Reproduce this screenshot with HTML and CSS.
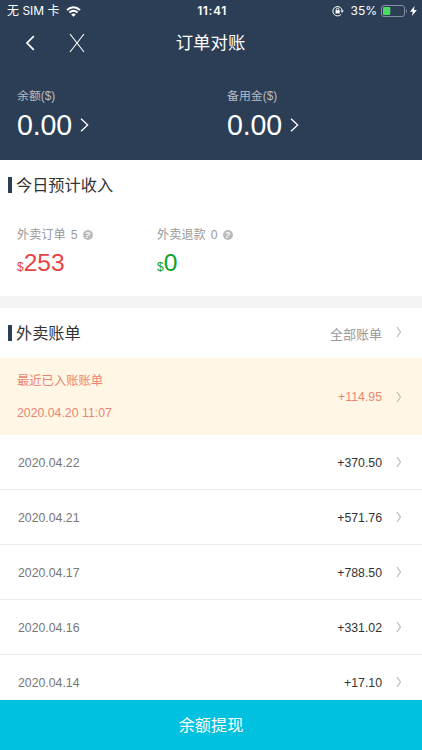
FILE: index.html
```html
<!DOCTYPE html>
<html lang="zh">
<head>
    <meta charset="UTF-8">
    <meta name="viewport" content="width=device-width, initial-scale=1.0">
    <title>订单对账</title>
    <link rel="stylesheet" href="styles.css">
</head>
<body>

    <div class="page">
        <header class="header">
            <div class="status-bar">
                <div class="status-left">
                    <span>无 SIM 卡</span>
                    <svg class="wifi" width="15" height="11" viewBox="0 0 15 11" fill="none" stroke="#fff" stroke-width="2">
                        <path d="M1 4.1C4.8.3 10.2.3 14 4.1"/>
                        <path d="M3.4 6.6c2.5-2.3 5.7-2.3 8.2 0"/>
                        <path d="M5.2 8.4c1.4-1.1 3.2-1.1 4.6 0L7.5 10.8z" fill="#fff" stroke="none"/>
                    </svg>
                </div>
                <div class="status-time">11:41</div>
                <div class="status-right">
                    <svg width="12" height="12" viewBox="0 0 12 12" fill="none" stroke="#fff">
                        <path d="M9.2 9.2A4.7 4.7 0 1 1 10.2 5.5"/>
                        <path d="M8.4 5.6h3.4l-1.7 2.2z" fill="#fff" stroke="none"/>
                        <path d="M4.4 5.4V4.3a1.2 1.2 0 0 1 2.4 0v1.1" stroke-width=".9"/>
                        <path d="M3.5 5.2h4.2v3.2H3.5z" fill="#fff" stroke="none"/>
                    </svg>
                    <span class="percent">35%</span>
                    <svg width="27" height="12" viewBox="0 0 27 12">
                        <rect x=".5" y=".5" width="23" height="11" rx="2.5" fill="none" stroke="#8490a0"/>
                        <rect x="2" y="2" width="7.3" height="8" rx="1" fill="#4cd964"/>
                        <path d="M25 4v4c1.4-.6 1.4-3.4 0-4z" fill="#8490a0"/>
                    </svg>
                    <svg class="bolt" width="7" height="10" viewBox="0 0 7 10">
                        <path d="M4.5 0L0 5.7h2.8L2 10l4.8-6H4z" fill="#fff"/>
                    </svg>
                </div>
            </div>

            <div class="nav">
                <svg class="nav-back" width="10" height="16" viewBox="0 0 10 16" fill="none" stroke="#fff" stroke-width="1.7">
                    <path d="M8.8 1.2L2 8l6.8 6.8"/>
                </svg>
                <svg class="nav-close" width="16" height="20" viewBox="0 0 16 20" fill="none" stroke="#fff" stroke-width="1.1">
                    <path d="M1 1l14 18M15 1L1 19"/>
                </svg>
                <h1>订单对账</h1>
            </div>

            <div class="balance">
                <div class="balance-item">
                    <p class="balance-label">余额($)</p>
                    <div class="balance-value">
                        <span>0.00</span>
                        <svg width="9" height="14" viewBox="0 0 9 14" fill="none" stroke="#fff" stroke-width="1.3"><path d="M1 .8L7.7 7 1 13.2"/></svg>
                    </div>
                </div>
                <div class="balance-item">
                    <p class="balance-label">备用金($)</p>
                    <div class="balance-value">
                        <span>0.00</span>
                        <svg width="9" height="14" viewBox="0 0 9 14" fill="none" stroke="#fff" stroke-width="1.3"><path d="M1 .8L7.7 7 1 13.2"/></svg>
                    </div>
                </div>
            </div>
        </header>

        <section class="income">
            <h2>今日预计收入</h2>
            <div class="income-list">
                <div class="income-item">
                    <p class="income-label">外卖订单<span class="count">5</span><i class="help">?</i></p>
                    <p class="income-value red"><small>$</small>253</p>
                </div>
                <div class="income-item">
                    <p class="income-label">外卖退款<span class="count">0</span><i class="help">?</i></p>
                    <p class="income-value green"><small>$</small>0</p>
                </div>
            </div>
        </section>

        <section class="bills">
            <div class="bills-head">
                <h2>外卖账单</h2>
                <span class="all">全部账单</span>
                <svg class="arrow" width="6" height="12" viewBox="0 0 6 12"><path d="M1 1l3.5 5L1 11"/></svg>
            </div>
            <div class="bill latest">
                <div class="bill-date">
                    <p>最近已入账账单</p>
                    <p>2020.04.20 11:07</p>
                </div>
                <span class="amount">+114.95</span>
                <svg class="arrow" width="6" height="12" viewBox="0 0 6 12"><path d="M1 1l3.5 5L1 11"/></svg>
            </div>
            <div class="bill">
                <span class="bill-date">2020.04.22</span>
                <span class="amount">+370.50</span>
                <svg class="arrow" width="6" height="12" viewBox="0 0 6 12"><path d="M1 1l3.5 5L1 11"/></svg>
            </div>
            <div class="bill">
                <span class="bill-date">2020.04.21</span>
                <span class="amount">+571.76</span>
                <svg class="arrow" width="6" height="12" viewBox="0 0 6 12"><path d="M1 1l3.5 5L1 11"/></svg>
            </div>
            <div class="bill">
                <span class="bill-date">2020.04.17</span>
                <span class="amount">+788.50</span>
                <svg class="arrow" width="6" height="12" viewBox="0 0 6 12"><path d="M1 1l3.5 5L1 11"/></svg>
            </div>
            <div class="bill">
                <span class="bill-date">2020.04.16</span>
                <span class="amount">+331.02</span>
                <svg class="arrow" width="6" height="12" viewBox="0 0 6 12"><path d="M1 1l3.5 5L1 11"/></svg>
            </div>
            <div class="bill">
                <span class="bill-date">2020.04.14</span>
                <span class="amount">+17.10</span>
                <svg class="arrow" width="6" height="12" viewBox="0 0 6 12"><path d="M1 1l3.5 5L1 11"/></svg>
            </div>
        </section>

        <button class="withdraw">余额提现</button>
    </div>

</body>
</html>
```
FILE: styles.css
```css
* {
    box-sizing: border-box;
}
body {
    margin: 0;
    font-family: "Liberation Sans", "Noto Sans CJK SC", sans-serif;
    background-color: #fff;
    color: #333;
}
h1, h2, p {
    margin: 0;
    font-weight: normal;
}
svg {
    display: block;
    flex-shrink: 0;
}
.page {
    display: flex;
    flex-direction: column;
    height: 100vh;
    overflow: hidden;
}

/* 顶部 */
.header {
    height: 160px;
    flex-shrink: 0;
    background-color: #2c3e55;
    color: #fff;
}
.status-bar {
    display: grid;
    grid-template-columns: 1fr auto 1fr;
    align-items: center;
    height: 22px;
    padding: 0 5px 0 7px;
    font-family: Inter, "Noto Sans CJK SC", sans-serif;
    font-size: 12px;
    line-height: 22px;
}
.status-left, .status-right {
    display: flex;
    align-items: center;
}
.wifi {
    margin-left: 6px;
}
.status-time {
    font-weight: 600;
    letter-spacing: 0.6px;
}
.status-right {
    justify-content: flex-end;
}
.percent {
    margin: 0 4px 0 7px;
}
.bolt {
    margin-left: 2px;
}
.nav {
    display: grid;
    grid-template-columns: 69px 1fr;
    align-items: center;
    height: 42px;
}
.nav-back {
    grid-column: 1;
    grid-row: 1;
    margin-left: 25px;
}
.nav-close {
    grid-column: 2;
    grid-row: 1;
}
.nav h1 {
    grid-column: 1 / -1;
    grid-row: 1;
    padding-right: 1px;
    font-size: 17.4px;
    line-height: 42px;
    text-align: center;
}
.balance {
    display: grid;
    grid-template-columns: 210px 1fr;
    padding: 23px 0 0 17px;
}
.balance-label {
    font-size: 11.9px;
    line-height: 18px;
    color: #b4bcc6;
}
.balance-value {
    display: flex;
    align-items: center;
    gap: 8px;
    font-size: 28.6px;
    line-height: 40px;
}
.balance-value span {
    letter-spacing: -0.2px;
}

/* 今日收入 */
h2 {
    display: flex;
    align-items: center;
    gap: 4px;
    font-size: 16.2px;
    line-height: 24px;
}
h2::before {
    content: "";
    width: 4px;
    height: 16px;
    background-color: #2c3e55;
}
.income {
    height: 148px;
    flex-shrink: 0;
    padding: 13px 8px 0;
    border-bottom: 12px solid #f4f4f4;
}
.income-list {
    display: grid;
    grid-template-columns: 140px 140px;
    padding: 28px 0 0 9px;
}
.income-label {
    display: flex;
    align-items: center;
    font-size: 12.2px;
    line-height: 20px;
    color: #999;
}
.count {
    margin: 0 5px;
}
.help {
    width: 10px;
    height: 10px;
    border-radius: 50%;
    background-color: #bbb;
    color: #fff;
    font-size: 9px;
    font-weight: bold;
    line-height: 10px;
    text-align: center;
}
.income-value {
    font-size: 24.6px;
    line-height: 36px;
}
.income-value small {
    font-size: 12px;
}
.red {
    color: #e64545;
}
.green {
    color: #0ca32b;
}

/* 账单列表 */
.bills {
    flex: 1;
    min-height: 0;
    overflow: hidden;
}
.bills-head {
    display: flex;
    align-items: center;
    height: 50px;
    padding: 0 20px 0 8px;
}
.all {
    margin-left: auto;
    font-size: 13px;
    color: #999;
}
.arrow {
    margin-left: 14px;
    fill: none;
    stroke: #b5b5b5;
    stroke-width: 1.1;
}
.bills-head .arrow {
    margin-bottom: 3px;
}
.bill {
    display: flex;
    align-items: center;
    height: 55px;
    padding: 0 20px 0 18px;
    border-bottom: 1px solid #ebebeb;
    font-size: 12.3px;
}
.bill-date {
    color: #777;
}
.bill-date, .amount {
    padding-top: 1px;
}
.amount {
    margin-left: auto;
}
.latest {
    height: 77px;
    padding-left: 17px;
    border-bottom: none;
    background-color: #fff6e5;
}
.latest .bill-date, .latest .amount {
    padding-top: 0;
    color: #ea8573;
}
.latest p {
    line-height: 32px;
}

/* 底部按钮 */
.withdraw {
    height: 50px;
    flex-shrink: 0;
    padding: 0 0 3px;
    border: none;
    background-color: #00c1e0;
    color: #fff;
    font-family: inherit;
    font-size: 16.2px;
}
```
